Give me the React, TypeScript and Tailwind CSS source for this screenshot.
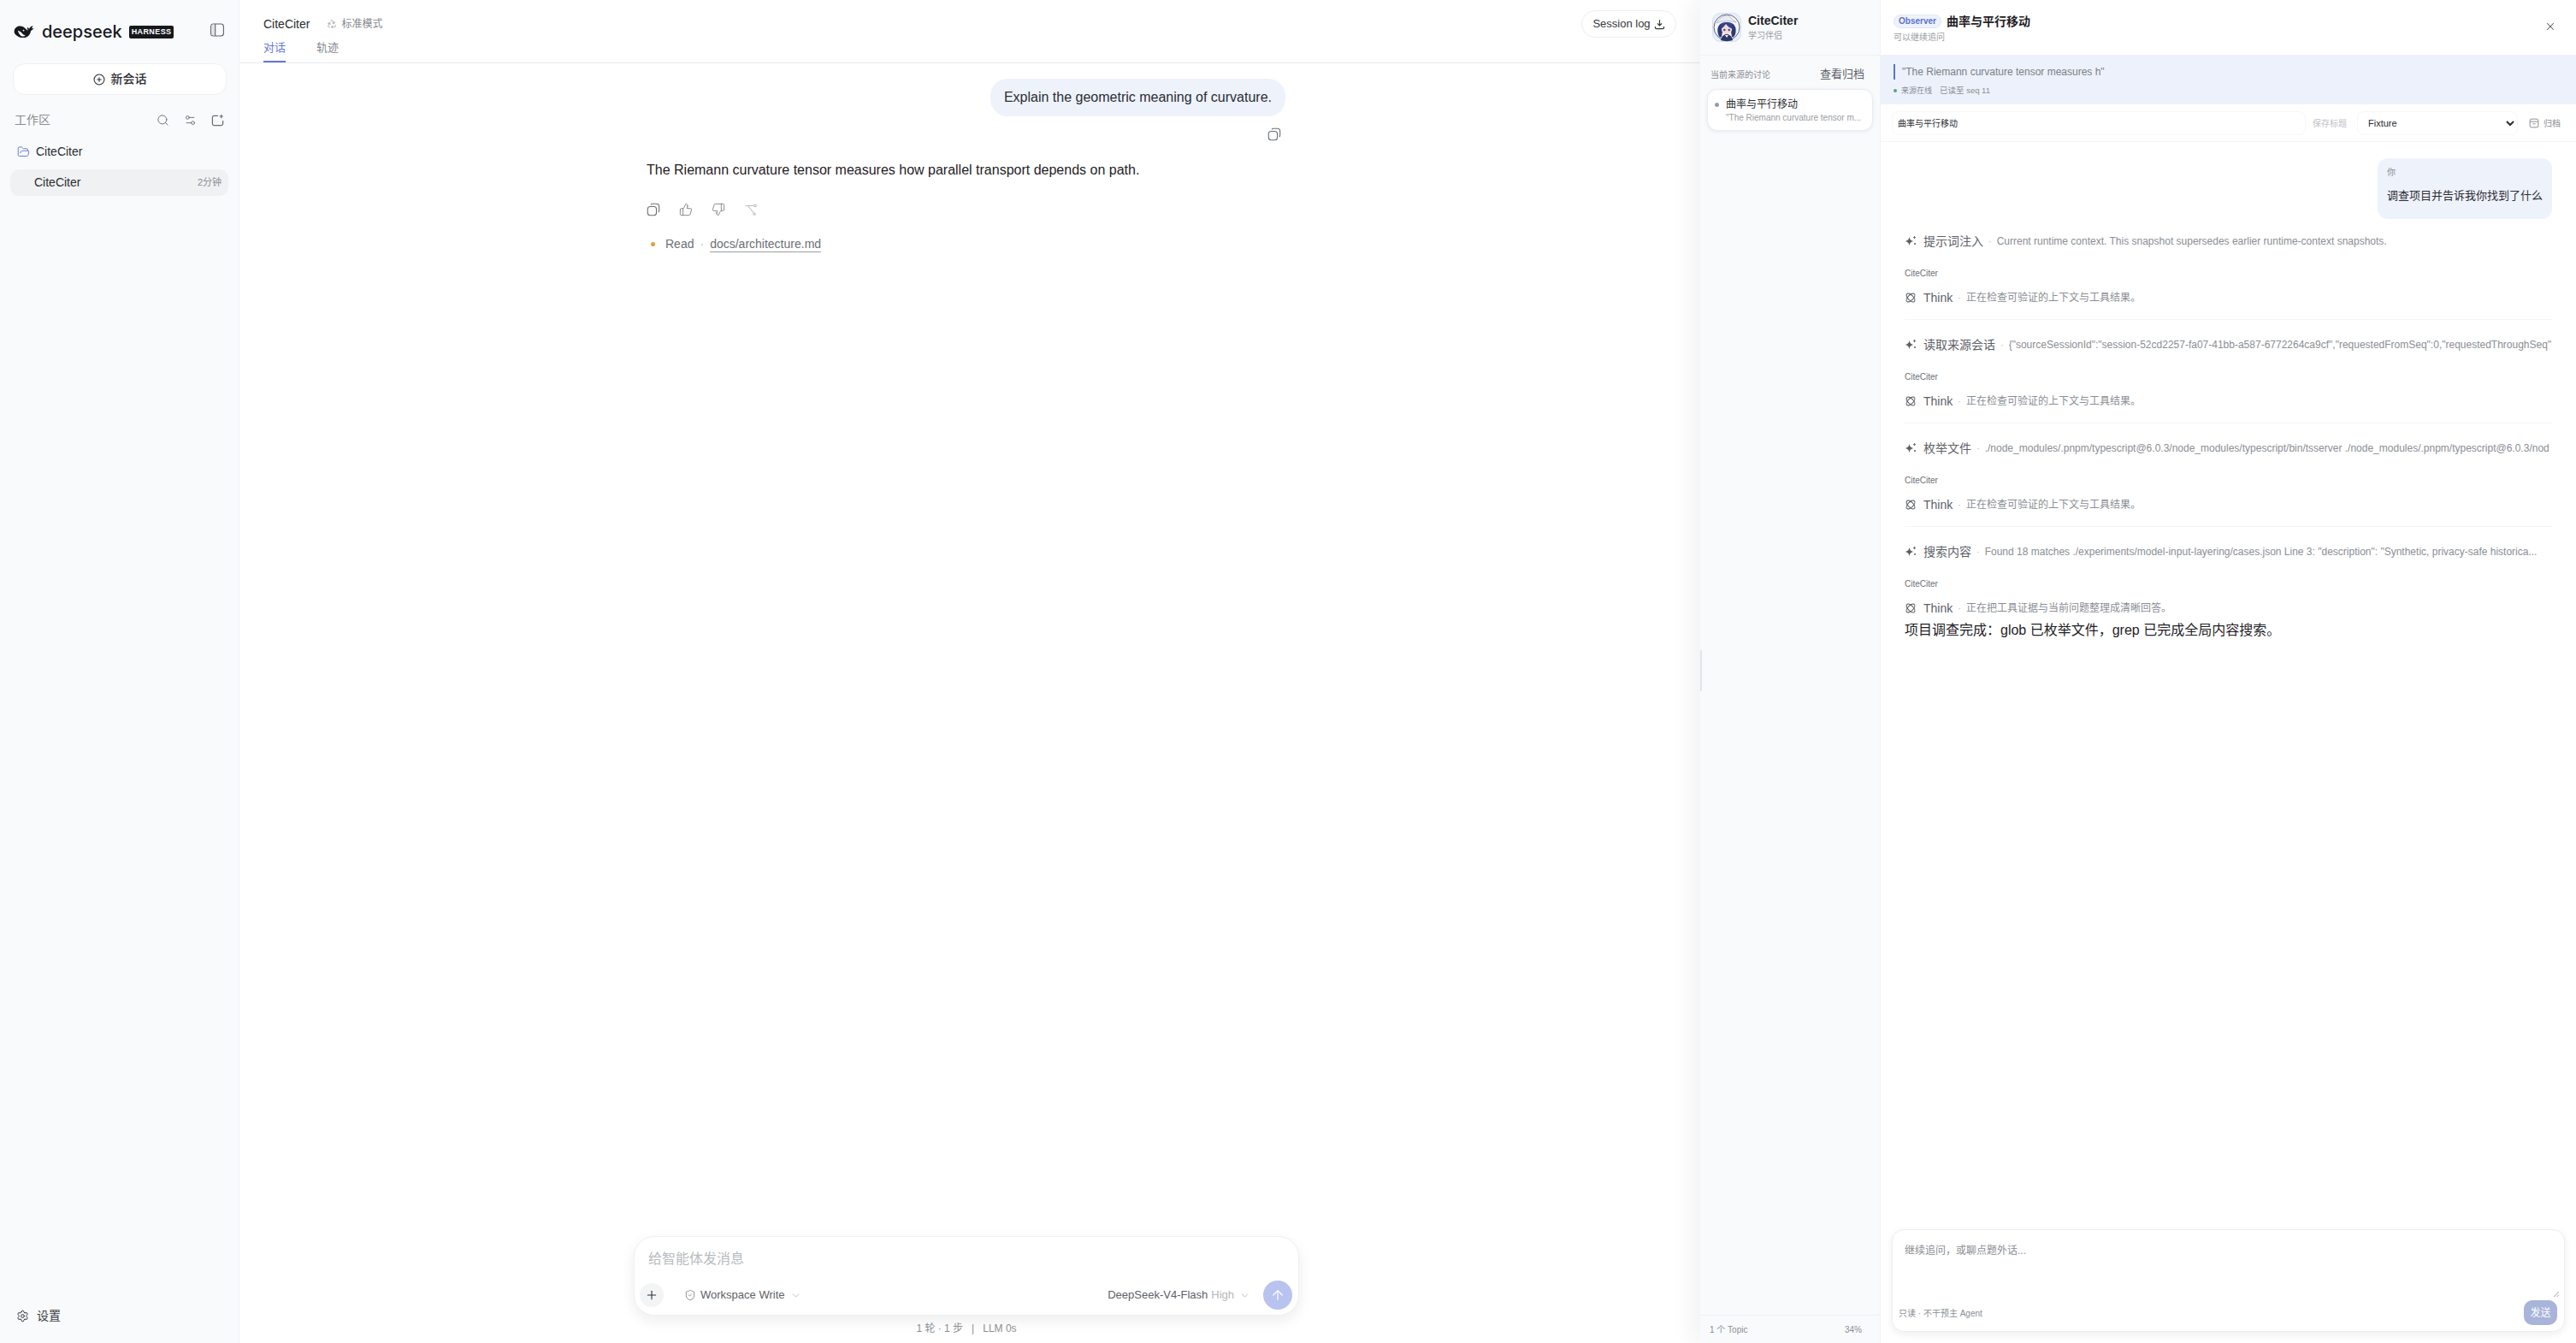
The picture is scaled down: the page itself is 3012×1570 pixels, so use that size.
import {
  ArrowUp,
  ChevronDown,
  FolderOpen,
  Plus,
  Recycle,
  Search,
  Settings,
  Settings2,
  ShieldCheck,
  ThumbsDown,
  ThumbsUp,
  X,
} from "lucide-react";

const rows = [
  {
    title: "提示词注入",
    desc: "Current runtime context. This snapshot supersedes earlier runtime-context snapshots.",
    think: "正在检查可验证的上下文与工具结果。",
  },
  {
    title: "读取来源会话",
    desc: '{"sourceSessionId":"session-52cd2257-fa07-41bb-a587-6772264ca9cf","requestedFromSeq":0,"requestedThroughSeq"',
    think: "正在检查可验证的上下文与工具结果。",
  },
  {
    title: "枚举文件",
    desc: "./node_modules/.pnpm/typescript@6.0.3/node_modules/typescript/bin/tsserver ./node_modules/.pnpm/typescript@6.0.3/nod",
    think: "正在检查可验证的上下文与工具结果。",
  },
  {
    title: "搜索内容",
    desc: 'Found 18 matches ./experiments/model-input-layering/cases.json Line 3: "description": "Synthetic, privacy-safe historica...',
    think: "正在把工具证据与当前问题整理成清晰回答。",
  },
];

const CopyIcon = () => (
  <svg viewBox="0 0 16 16" className="h-4 w-4 text-[#6b7076]" fill="none" stroke="currentColor" strokeWidth="1.1">
    <rect x="1.300" y="4.500" width="10.200" height="10.200" rx="3" />
    <path d="M5 2.300c.5-.6 1.200-1 2-1h4.500c1.800 0 3.200 1.400 3.200 3.200V9c0 .9-.4 1.600-1 2.100" />
  </svg>
);

const ForkIcon = () => (
  <svg viewBox="0 0 16 16" className="h-4 w-4 text-[#bcc0c4]" fill="none" stroke="currentColor" strokeWidth="1.100">
    <path d="M1.500 3.500h10M4.500 3.500l6.500 8" />
    <circle cx="13" cy="3.500" r="1.300" />
    <circle cx="12" cy="13" r="1.300" />
  </svg>
);

const SparkIcon = () => (
  <svg viewBox="0 0 14 14" className="h-[14px] w-[14px] shrink-0 text-[#5d6167]" fill="currentColor">
    <path d="M5.500 1.800c.4 3.200 1.600 4.500 5 5.300-3.400.8-4.600 2.100-5 5.300-.4-3.200-1.600-4.500-5-5.300 3.400-.8 4.600-2.100 5-5.300z" />
    <path d="M11.500 1v3.200M9.900 2.600h3.200" stroke="currentColor" strokeWidth="0.900" fill="none" />
    <circle cx="12" cy="10" r="1" />
  </svg>
);

const ThinkIcon = () => (
  <svg viewBox="0 0 14 14" className="h-[14px] w-[14px] shrink-0 text-[#5d6167]" fill="none" stroke="currentColor" strokeWidth="1.100">
    <ellipse cx="7" cy="7" rx="6.200" ry="3.100" transform="rotate(45 7 7)" />
    <ellipse cx="7" cy="7" rx="6.200" ry="3.100" transform="rotate(-45 7 7)" />
  </svg>
);

const DeepseekWhale = () => (
  <svg viewBox="0 0 26 20" className="h-[19px] w-[27px]" fill="#16181c">
    <path d="M.6 8.200C1.300 4.600 4.400 2.500 8 2.700c3 .2 5.200 1.700 7 3.700 1 1.100 1.700 1.500 2.600 1.400-.9-1-1.400-2.500-.9-4 .5 1.100 1.300 1.800 2.400 2.200.3-1.500 1.500-3 4.400-3.600-.4 1.200-.9 2.100-1.600 2.900.8.300 1.500.200 2.600-.2-.8 1.700-2.100 2.800-3.600 3.200-.5 4.900-3.900 8.200-8.900 8.600-3.100.2-6.300-.7-8.900-3C.9 12.400.200 10.400.6 8.200z" />
    <path d="M5 8.200c1.800.2 4.200 1.800 6 4.200 1 1.300 2.400 1.800 3.600 1.200-1.300 2-4.100 2.300-6 .8C6.900 13 5.500 10.700 5 8.200z" fill="#f8fafc" />
    <circle cx="12" cy="8" r="1" fill="#f8fafc" />
  </svg>
);

const Avatar = () => (
  <svg viewBox="0 0 34 34" className="h-[34px] w-[34px] shrink-0">
    <rect x="0.500" y="0.500" width="33" height="33" rx="9" fill="#e8eefb" stroke="#d5def5" />
    <circle cx="17" cy="17" r="15" fill="#f4f5f8" stroke="#3c4257" strokeWidth="0.800" />
    <path d="M5 12c3-6 8-9 14-9 2 2 5 5 9 8-7-2-16-2-23 1z" fill="#e9ebf2" stroke="#8b93ad" strokeWidth="0.500" />
    <path d="M7 25C5 18 7 11 17 11s12 7 10 14c-1 3-3 4-4 3l-1-6-10 0-1 6c-1 1-3 1-4-3z" fill="#2c3a78" />
    <path d="M11 19c0-4 3-6 6-6s6 2 6 6c0 4-3 6-6 6s-6-2-6-6z" fill="#f3dcd6" />
    <path d="M10 19c2-1 4-3 6-6 2 3 5 5 8 6l-1-7H11z" fill="#35458c" />
    <circle cx="14.300" cy="20" r="1.200" fill="#35458c" />
    <circle cx="19.700" cy="20" r="1.200" fill="#35458c" />
    <path d="M10 32c1-5 4-7 7-7s6 2 7 7c-4 1.500-10 1.500-14 0z" fill="#2b3766" />
    <path d="M15 26l2 3 2-3z" fill="#f4f5f8" />
  </svg>
);

function Sidebar() {
  return (
    <aside className="flex w-[280px] shrink-0 flex-col border-r border-[#f0f2f6] bg-[#f8fafc] pl-[12px] pr-[12px]">
      <div className="flex h-[74px] items-start justify-between pl-[3px] pr-[5px] pt-[27px]">
        <div className="flex items-center">
          <DeepseekWhale />
          <span className="ml-[7px] font-['Inter',sans-serif] text-[20px] font-medium leading-[20px] text-[#16181c]">
            deepseek
          </span>
          <span className="ml-[8px] rounded-[2px] bg-[#16181c] px-[3px] text-[9px] font-bold leading-[15px] tracking-[0.4px] text-white">
            HARNESS
          </span>
        </div>
        <svg viewBox="0 0 16 16" className="h-4 w-4 text-[#5f6368]" fill="none" stroke="currentColor" strokeWidth="1.100">
          <rect x="0.600" y="1" width="14.800" height="14" rx="3" />
          <rect x="1.200" y="1.600" width="4.300" height="12.800" rx="2" fill="#dfe2e6" stroke="none" />
          <path d="M5.700 1v14" />
        </svg>
      </div>

      <button className="mx-[3px] flex h-[37px] w-[250px] items-center justify-center gap-[7px] rounded-[14px] border border-[#eef0f3] bg-white text-[14px] font-medium text-[#2a2d31]">
        <svg viewBox="0 0 16 16" className="h-[14px] w-[14px]" fill="none" stroke="currentColor" strokeWidth="1.200">
          <circle cx="8" cy="8" r="6.800" />
          <path d="M8 5v6M5 8h6" />
        </svg>
        新会话
      </button>

      <div className="mt-[18px] flex h-[22px] items-center justify-between pl-[5px] pr-[5px]">
        <span className="text-[14px] text-[#8a8e94]">工作区</span>
        <div className="flex items-center gap-[17px] text-[#6a6e74]">
          <Search className="h-[15px] w-[15px]" strokeWidth={1.5} />
          <Settings2 className="h-[15px] w-[15px]" strokeWidth={1.5} />
          <svg viewBox="0 0 16 16" className="h-[15px] w-[15px]" fill="none" stroke="currentColor" strokeWidth="1.300">
            <path d="M8.500 2.500H3.500a2 2 0 0 0-2 2v8a2 2 0 0 0 2 2h9a2 2 0 0 0 2-2V8.500" />
            <path d="M12.500 1v4.500M10.200 3.200h4.600" />
          </svg>
        </div>
      </div>

      <div className="mt-[15px] flex h-[22px] items-center gap-[7px] pl-[8px] text-[14px] text-[#2a2d31]">
        <FolderOpen className="h-[15px] w-[15px] text-[#6a7fd6]" strokeWidth={1.6} />
        CiteCiter
      </div>

      <div className="mt-[10px] flex h-[31px] items-center justify-between rounded-[10px] bg-[#f0f1f3] pl-[28px] pr-[8px]">
        <span className="text-[14px] text-[#2a2d31]">CiteCiter</span>
        <span className="text-[11px] text-[#8a8e94]">2分钟</span>
      </div>

      <div className="mt-auto mb-[21px] flex items-center gap-[9px] pl-[7px] text-[14px] text-[#3b3e42]">
        <Settings className="h-[15px] w-[15px] text-[#2a2d31]" strokeWidth={1.6} />
        设置
      </div>
    </aside>
  );
}

function MainChat() {
  return (
    <main className="flex min-w-0 flex-1 flex-col bg-white">
      <header className="flex h-[74px] shrink-0 justify-between border-b border-[#e8eaed] pl-[28px] pr-[28px]">
        <div>
          <div className="flex h-[38px] items-end gap-[20px]">
            <span className="text-[14px] leading-[20px] text-[#2a2d31]">CiteCiter</span>
            <span className="flex items-center gap-[5px] text-[12px] leading-[20px] text-[#85898f]">
              <Recycle className="h-[12px] w-[12px]" strokeWidth={1.3} />
              标准模式
            </span>
          </div>
          <div className="mt-[8px] flex gap-[36px] text-[13px] leading-[20px]">
            <span className="h-[27px] border-b-[2px] border-[#6478d2] text-[#6478d2]">对话</span>
            <span className="text-[#85898f]">轨迹</span>
          </div>
        </div>
        <button className="mt-[12px] flex h-[32px] w-[111px] items-center justify-center gap-[4px] rounded-full border border-[#eceef0] text-[13px] text-[#35383c]">
          Session log
          <svg viewBox="0 0 16 16" className="h-[13px] w-[13px]" fill="none" stroke="currentColor" strokeWidth="1.500">
            <path d="M8 1.500v8M4.800 6.600 8 9.800l3.200-3.200M1.800 11v1.500c0 1 .7 1.700 1.700 1.700h9c1 0 1.700-.7 1.700-1.700V11" />
          </svg>
        </button>
      </header>

      <div className="flex min-h-0 flex-1 flex-col pl-[476px]">
        <div className="flex w-[747px] flex-col">
          <div className="mt-[18px] flex justify-end">
            <div className="flex h-[44px] items-center rounded-[20px] bg-[#eef2fb] px-[16px] text-[16px] text-[#2a2d31]">
              Explain the geometric meaning of curvature.
            </div>
          </div>
          <div className="mt-[13px] flex justify-end pr-[5px]">
            <CopyIcon />
          </div>
          <p className="mt-[22px] text-[16px] leading-[24px] text-[#1f2226]">
            The Riemann curvature tensor measures how parallel transport depends on path.
          </p>
          <div className="mt-[26px] flex items-center gap-[22px] text-[#6b7076]">
            <CopyIcon />
            <ThumbsUp className="h-4 w-4" strokeWidth={1.2} />
            <ThumbsDown className="h-4 w-4" strokeWidth={1.2} />
            <ForkIcon />
          </div>
          <div className="mt-[22px] flex items-center text-[14px] text-[#6b7076]">
            <span className="ml-[5px] h-[5px] w-[5px] rounded-full bg-[#e0a13c]" />
            <span className="ml-[12px]">Read</span>
            <span className="mx-[7px] text-[#b5b8bc]">·</span>
            <span className="border-b border-[#9a9ea3] leading-[17px]">docs/architecture.md</span>
          </div>
        </div>

        <div className="mt-auto -ml-[15px] w-[778px]">
          <div className="flex h-[93px] flex-col rounded-[24px] border border-[#eef0f2] bg-white pl-[6px] pr-[7px] shadow-[0_6px_16px_rgba(20,30,50,0.08)]">
            <div className="pl-[10px] pt-[15px] text-[16px] leading-[22px] text-[#b8bbbf]">给智能体发消息</div>
            <div className="mt-auto mb-[6px] flex items-center">
              <div className="flex h-[28px] w-[28px] items-center justify-center rounded-full bg-[#f2f4f6] text-[#2a2d31]">
                <Plus className="h-[16px] w-[16px]" strokeWidth={1.6} />
              </div>
              <ShieldCheck className="ml-[24px] h-[14px] w-[14px] text-[#6b7076]" strokeWidth={1.3} />
              <span className="ml-[5px] text-[13px] text-[#5d6167]">Workspace Write</span>
              <ChevronDown className="ml-[6px] h-[13px] w-[13px] text-[#a2a6ab]" strokeWidth={1.3} />
              <span className="ml-auto text-[13px] text-[#5d6167]">DeepSeek-V4-Flash</span>
              <span className="ml-[4px] text-[13px] text-[#b4b7bb]">High</span>
              <ChevronDown className="ml-[6px] h-[13px] w-[13px] text-[#a2a6ab]" strokeWidth={1.3} />
              <div className="ml-[15px] flex h-[34px] w-[34px] items-center justify-center rounded-full bg-[#b8c3ef] text-white">
                <ArrowUp className="h-[18px] w-[18px]" strokeWidth={1.6} />
              </div>
            </div>
          </div>
          <div className="mb-[9px] mt-[7px] text-center text-[12px] leading-[16px] text-[#8a8e94]">
            1 轮 · 1 步 &nbsp;&nbsp;|&nbsp;&nbsp; LLM 0s
          </div>
        </div>
      </div>
    </main>
  );
}

function TopicList() {
  return (
    <div className="flex w-[211px] shrink-0 flex-col border-r border-[#eff1f5] bg-[#f8fafc]">
      <div className="flex h-[65px] shrink-0 items-center gap-[8px] border-b border-[#eff1f5] pl-[14px] pb-[1px]">
        <Avatar />
        <div>
          <div className="text-[14px] font-bold leading-[19px] text-[#1f2226]">CiteCiter</div>
          <div className="mt-[1px] text-[10px] leading-[14px] text-[#9a9ea3]">学习伴侣</div>
        </div>
      </div>
      <div className="mt-[12px] flex h-[20px] items-center justify-between pl-[12px] pr-[18px]">
        <span className="text-[10px] text-[#8a8e94]">当前来源的讨论</span>
        <span className="text-[13px] text-[#5d6167]">查看归档</span>
      </div>
      <div className="ml-[8px] mt-[7px] h-[49px] w-[194px] rounded-[12px] border border-[#e9ecf3] bg-white pl-[8px] pr-[4px] pt-[9px] shadow-[0_1px_4px_rgba(40,50,90,0.08)]">
        <div className="flex items-center gap-[8px]">
          <span className="h-[5px] w-[5px] shrink-0 rounded-full bg-[#9a9ea6]" />
          <span className="text-[12px] leading-[17px] text-[#2a2d31]">曲率与平行移动</span>
        </div>
        <div className="whitespace-nowrap pl-[13px] text-[10px] leading-[14px] text-[#9a9ea3]">
          "The Riemann curvature tensor m...
        </div>
      </div>
      <div className="mt-auto flex h-[33px] items-center justify-between border-t border-[#eff1f5] pl-[11px] pr-[21px] text-[10px] text-[#8a8e94]">
        <span>1 个 Topic</span>
        <span>34%</span>
      </div>
    </div>
  );
}

function ObserverThread() {
  return (
    <div className="flex min-w-0 flex-1 flex-col bg-white">
      <div className="flex h-[64px] shrink-0 justify-between pl-[15px] pr-[23px] pt-[16px]">
        <div>
          <div className="flex h-[17px] items-center gap-[6px]">
            <span className="rounded-full border border-[#e0e6f7] bg-[#eef2fb] px-[5px] text-[10px] font-bold leading-[14px] text-[#5f72c8]">
              Observer
            </span>
            <span className="text-[14px] font-bold leading-[18px] text-[#1f2226]">曲率与平行移动</span>
          </div>
          <div className="mt-[4px] text-[10px] leading-[14px] text-[#9a9ea3]">可以继续追问</div>
        </div>
        <X className="mt-[8px] h-[14px] w-[14px] text-[#55595f]" strokeWidth={1.8} />
      </div>

      <div className="h-[58px] shrink-0 bg-[#edf1fb] pl-[15px] pt-[11px]">
        <div className="flex h-[18px] items-center border-l-[2px] border-[#5f72c8] pl-[8px] text-[12px] text-[#7a7e85]">
          "The Riemann curvature tensor measures h"
        </div>
        <div className="mt-[6px] flex items-center text-[9px] leading-[14px] text-[#8a8e94]">
          <span className="h-[4px] w-[4px] rounded-full bg-[#57a57a]" />
          <span className="ml-[5px]">来源在线</span>
          <span className="ml-[9px] text-[9.500px]">已读至 seq 11</span>
        </div>
      </div>

      <div className="flex h-[44px] shrink-0 items-center gap-[8px] border-b border-[#f3f4f6] pl-[13px] pr-[16px] pt-[1px]">
        <div className="flex h-[28px] w-[484px] items-center rounded-[8px] border border-[#f6f7f8] pl-[6px] text-[10px] text-[#2a2d31]">
          曲率与平行移动
        </div>
        <span className="w-[44px] shrink-0 whitespace-nowrap text-[10px] text-[#bfc2c6]">保存标题</span>
        <select className="h-[28px] w-[188px] rounded-[8px] border border-[#f6f7f8] bg-white pl-[8px] text-[11px] text-[#2a2d31]">
          <option>Fixture</option>
        </select>
        <span className="ml-[5px] flex shrink-0 items-center gap-[5px] whitespace-nowrap text-[10px] text-[#8a8e94]">
          <svg viewBox="0 0 16 16" className="h-[12px] w-[12px]" fill="none" stroke="currentColor" strokeWidth="1.300">
            <rect x="1.500" y="1.500" width="13" height="13" rx="2.500" />
            <path d="M1.500 5.500h13M6 9h4" />
          </svg>
          归档
        </span>
      </div>

      <div className="flex min-h-0 flex-1 flex-col pl-[28px] pr-[28px] pt-[19px]">
        <div className="ml-auto h-[71px] w-[204px] rounded-[12px] bg-[#eef2fb] pl-[11px] pt-[10px]">
          <div className="text-[10px] leading-[14px] text-[#8a8e94]">你</div>
          <div className="mt-[10px] text-[13px] leading-[20px] text-[#2a2d31]">调查项目并告诉我你找到了什么</div>
        </div>

        <div className="mt-[15px] flex flex-col">
          {rows.map((row, i) => (
            <div
              key={row.title}
              className={i < 3 ? "mb-[18px] h-[103px] border-b border-[#f3f4f6]" : ""}
            >
              <div className="flex h-[22px] items-center whitespace-nowrap">
                <SparkIcon />
                <span className="ml-[8px] shrink-0 text-[14px] text-[#5d6167]">{row.title}</span>
                <span className="mx-[6px] shrink-0 text-[11px] text-[#b5b8bc]">·</span>
                <span className="overflow-hidden text-[12px] text-[#8a8e94]">{row.desc}</span>
              </div>
              <div className="mt-[20px] text-[10px] font-medium leading-[14px] text-[#6b7076]">CiteCiter</div>
              <div className="mt-[11px] flex h-[20px] items-center whitespace-nowrap">
                <ThinkIcon />
                <span className="ml-[8px] text-[14px] text-[#5d6167]">Think</span>
                <span className="mx-[6px] text-[11px] text-[#b5b8bc]">·</span>
                <span className="text-[12px] text-[#8a8e94]">{row.think}</span>
              </div>
            </div>
          ))}
          <p className="mt-[5px] text-[16px] leading-[22px] text-[#1f2226]">
            项目调查完成：glob 已枚举文件，grep 已完成全局内容搜索。
          </p>
        </div>
      </div>

      <div className="relative mb-[13px] ml-[13px] mr-[13px] h-[120px] shrink-0 rounded-[14px] border border-[#eceef1] bg-white shadow-[0_3px_10px_rgba(20,30,50,0.07)]">
        <div className="flex h-full flex-col pl-[7px] pr-[8px]">
          <div className="pl-[7px] pt-[16px] text-[12px] leading-[16px] text-[#8a8e94]">继续追问，或聊点题外话...</div>
          <div className="mt-auto mb-[7px] flex items-end justify-between">
            <span className="mb-[6px] text-[10px] leading-[14px] text-[#8a8e94]">只读 · 不干预主 Agent</span>
            <span className="flex h-[29px] w-[39px] items-center justify-center rounded-[10px] bg-[#a8b4da] text-[12px] text-white">
              发送
            </span>
          </div>
        </div>
        <svg viewBox="0 0 8 8" className="absolute right-[5px] top-[71px] h-[8px] w-[8px] text-[#8a8e94]" fill="none" stroke="currentColor" strokeWidth="0.800">
          <path d="M7 1 1 7M7 4.500 4.500 7" />
        </svg>
      </div>
    </div>
  );
}

export default function App() {
  return (
    <div className="flex h-screen w-screen overflow-hidden bg-white font-['Liberation_Sans','Noto_Sans_CJK_SC',sans-serif]">
      <Sidebar />
      <MainChat />
      <div className="relative flex w-[1024px] shrink-0 shadow-[-10px_0_24px_rgba(20,30,50,0.06)]">
        <span className="absolute left-0 top-[760px] h-[48px] w-[2px] bg-[#e3e5e9]" />
        <TopicList />
        <ObserverThread />
      </div>
    </div>
  );
}
